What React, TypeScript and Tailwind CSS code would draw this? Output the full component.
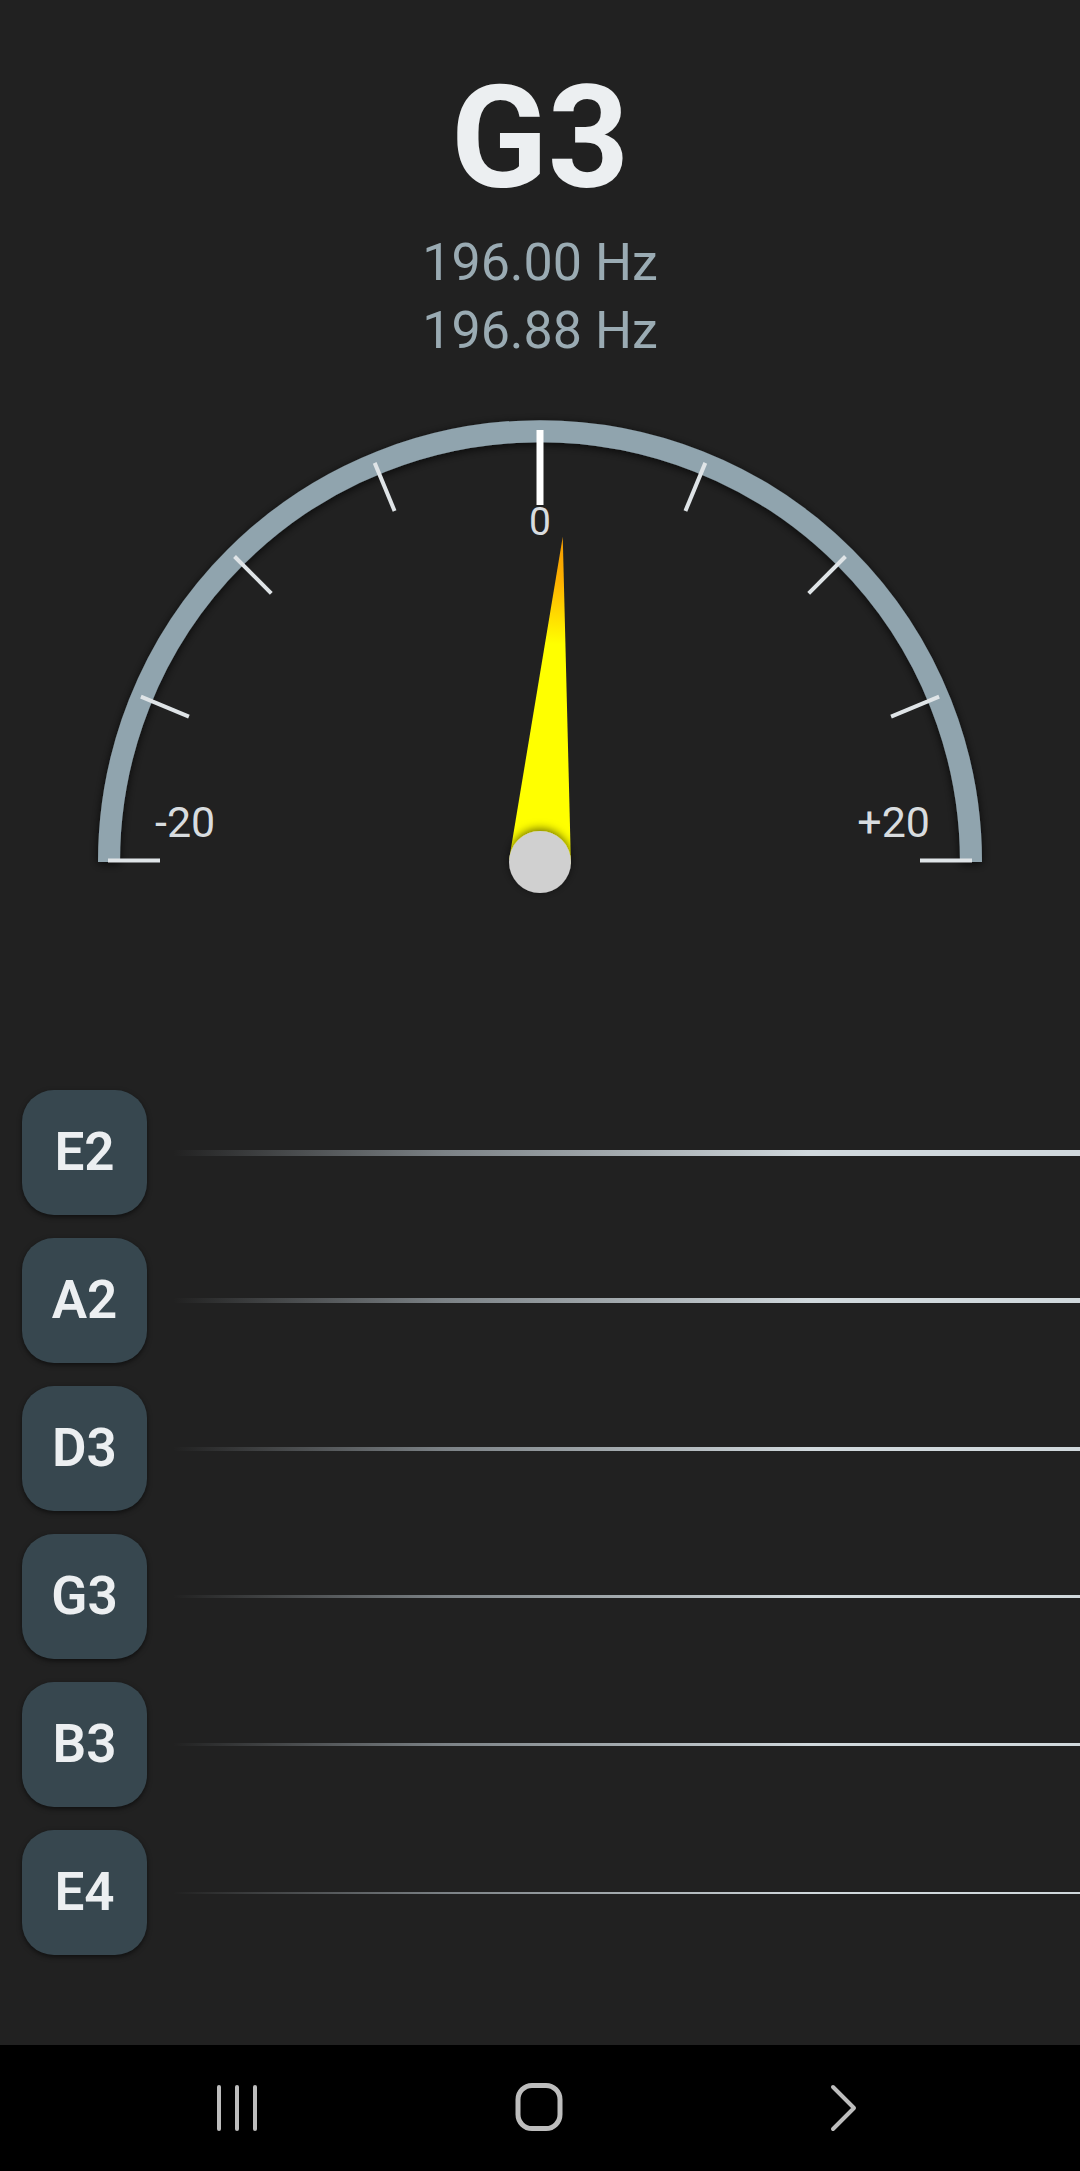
import React from 'react';

const CX = 540;
const CY = 862;

const strings = [
  { note: 'E2', line: 'h-[6px]' },
  { note: 'A2', line: 'h-[5px]' },
  { note: 'D3', line: 'h-[4px]' },
  { note: 'G3', line: 'h-[3px]' },
  { note: 'B3', line: 'h-[3px]' },
  { note: 'E4', line: 'h-[2px]' },
];

// 9 ticks, -20 .. +20 cents in steps of 5
const ticks = Array.from({ length: 9 }, (_, i) => {
  const a = Math.PI - (i * Math.PI) / 8;
  const major = i === 4;
  const r1 = 432;
  const r2 = major ? 357 : 380;
  const end = i === 0 || i === 8 ? -1.5 : 0;
  return {
    x1: CX + r1 * Math.cos(a),
    y1: CY - r1 * Math.sin(a) + end,
    x2: CX + r2 * Math.cos(a),
    y2: CY - r2 * Math.sin(a) + end,
    major,
  };
});

const Gauge: React.FC = () => (
  <svg width={1080} height={555} viewBox="0 365 1080 555" className="block">
    <defs>
      <filter id="arcShadow" x="-10%" y="-10%" width="120%" height="130%">
        <feDropShadow dx="0" dy="2" stdDeviation="5" floodColor="#000" floodOpacity="0.75" />
      </filter>
      <filter id="knobShadow" x="-60%" y="-60%" width="220%" height="220%">
        <feDropShadow dx="0" dy="-2" stdDeviation="5" floodColor="#000" floodOpacity="0.6" />
      </filter>
      <linearGradient id="needleFill" x1="0" y1="0" x2="0" y2="1">
        <stop offset="0" stopColor="#f29a00" />
        <stop offset="0.14" stopColor="#ffb300" />
        <stop offset="0.33" stopColor="#ffff00" />
        <stop offset="1" stopColor="#ffff00" />
      </linearGradient>
    </defs>

    <path
      d={`M ${CX - 431} ${CY} A 431 431 0 0 1 ${CX + 431} ${CY}`}
      fill="none"
      stroke="#90a4ae"
      strokeWidth={22}
      filter="url(#arcShadow)"
    />

    {ticks.map((t, i) => (
      <line
        key={i}
        x1={t.x1}
        y1={t.y1}
        x2={t.x2}
        y2={t.y2}
        stroke={t.major ? '#ffffff' : '#dfe4e7'}
        strokeWidth={t.major ? 7 : 4}
      />
    ))}

    <g fontFamily="Roboto, sans-serif" fill="#d8dcdf">
      <text x={155} y={837} fontSize={43}>-20</text>
      <text x={930} y={837} fontSize={43} textAnchor="end">+20</text>
      <text x={540} y={535} fontSize={39} textAnchor="middle">0</text>
    </g>

    <g transform={`rotate(4 ${CX} ${CY})`}>
      <polygon points={`${CX - 31},${CY} ${CX + 31},${CY} ${CX},${CY - 326}`} fill="url(#needleFill)" />
    </g>
    <circle cx={CX} cy={CY} r={31} fill="#d0d0d0" filter="url(#knobShadow)" />
  </svg>
);

const NavBar: React.FC = () => (
  <div className="h-[126px] bg-black flex items-center justify-center gap-[243px]">
    <svg width={60} height={60} viewBox="0 0 60 60">
      <g stroke="#bdbdbd" strokeWidth={4} strokeLinecap="round">
        <line x1={12} y1={9} x2={12} y2={51} />
        <line x1={30} y1={9} x2={30} y2={51} />
        <line x1={48} y1={9} x2={48} y2={51} />
      </g>
    </svg>
    <svg width={60} height={60} viewBox="0 0 60 60">
      <rect x={8} y={7.5} width={42} height={43} rx={14} fill="none" stroke="#bdbdbd" strokeWidth={5} />
    </svg>
    <svg width={60} height={60} viewBox="0 0 60 60">
      <polyline points="20,9 41,30 20,51" fill="none" stroke="#bdbdbd" strokeWidth={4} strokeLinecap="round" strokeLinejoin="round" />
    </svg>
  </div>
);

const App: React.FC = () => {
  return (
    <div className="w-[1080px] h-[2171px] bg-[#212121] flex flex-col font-['Roboto',sans-serif] overflow-hidden">
      <div className="h-[2045px] flex flex-col">
        {/* note + frequencies */}
        <div className="pt-[68px] flex flex-col items-center">
          <div className="text-[142px] leading-[142px] font-bold text-[#eceff1]">G3</div>
          <div className="mt-[19px] flex flex-col items-center text-[52px] leading-[68px] text-[#9aabb3]">
            <span>196.00 Hz</span>
            <span>196.88 Hz</span>
          </div>
        </div>

        <Gauge />

        {/* strings */}
        <div className="mt-[170px] flex flex-col gap-[23px]">
          {strings.map((s) => (
            <div key={s.note} className="flex items-center h-[125px] pl-[22px]">
              <button className="w-[125px] h-[125px] shrink-0 rounded-[32px] bg-[#37474f] shadow-[0_2px_5px_rgba(0,0,0,0.55)] text-[#eceff1] text-[53px] font-semibold flex items-center justify-center">
                {s.note}
              </button>
              <div className={`flex-1 ml-[26px] ${s.line} bg-linear-to-r from-transparent via-[#7c8286] via-30% to-[#d0d8dc] to-70%`} />
            </div>
          ))}
        </div>
      </div>

      <NavBar />
    </div>
  );
};

export default App;
